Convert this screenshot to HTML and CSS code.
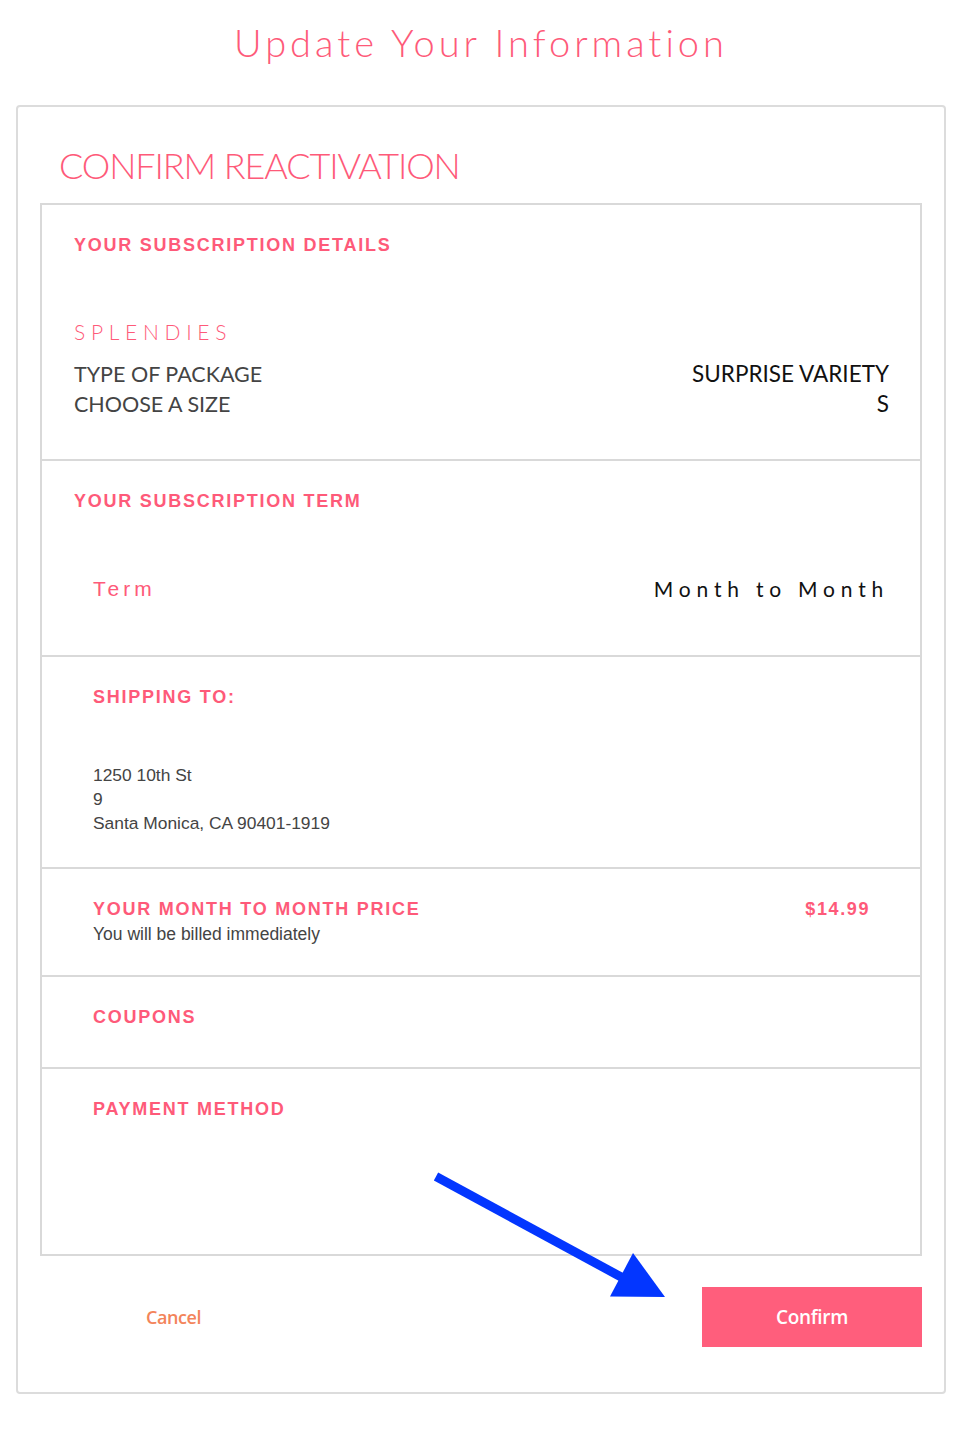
FILE: index.html
```html
<!DOCTYPE html>
<html lang="en">
<head>
<meta charset="utf-8">
<title>Update Your Information</title>
<link rel="stylesheet" href="styles.css">
</head>
<body>
<div class="page">
  <h1 class="page-title">Update Your Information</h1>
  <div class="card">
    <h2 class="card-title">CONFIRM REACTIVATION</h2>
    <div class="summary">
      <section class="sec sec-details">
        <h3 class="sec-head">YOUR SUBSCRIPTION DETAILS</h3>
        <div class="brand">SPLENDIES</div>
        <div class="kv">
          <div class="kv-row"><span class="kv-key">TYPE OF PACKAGE</span><span class="kv-val">SURPRISE VARIETY</span></div>
          <div class="kv-row"><span class="kv-key">CHOOSE A SIZE</span><span class="kv-val">S</span></div>
        </div>
      </section>
      <section class="sec sec-term">
        <h3 class="sec-head">YOUR SUBSCRIPTION TERM</h3>
        <div class="term-row">
          <span class="term-key">Term</span>
          <span class="term-val">Month to Month</span>
        </div>
      </section>
      <section class="sec sec-ship">
        <h3 class="sec-head">SHIPPING TO:</h3>
        <div class="address">
          <div>1250 10th St</div>
          <div>9</div>
          <div>Santa Monica, CA 90401-1919</div>
        </div>
      </section>
      <section class="sec sec-price">
        <div class="price-row">
          <h3 class="sec-head">YOUR MONTH TO MONTH PRICE</h3>
          <span class="price">$14.99</span>
        </div>
        <div class="price-note">You will be billed immediately</div>
      </section>
      <section class="sec sec-coupons">
        <h3 class="sec-head">COUPONS</h3>
      </section>
      <section class="sec sec-payment">
        <h3 class="sec-head">PAYMENT METHOD</h3>
      </section>
    </div>
    <div class="actions">
      <a class="cancel" href="#">Cancel</a>
      <button class="confirm" type="button">Confirm</button>
    </div>
  </div>
  <svg class="arrow" width="240" height="140" viewBox="0 0 240 140" aria-hidden="true">
    <line x1="6" y1="11.5" x2="193" y2="113" stroke="#0336ff" stroke-width="9"/>
    <polygon points="235,132 180,131.5 203,88" fill="#0336ff"/>
  </svg>
</div>
</body>
</html>
```

FILE: styles.css
```css
html, body {
  margin: 0;
  padding: 0;
  background: #ffffff;
}

.page {
  position: relative;
  width: 962px;
}

.page-title {
  margin: 0 0 40px;
  padding-top: 19px;
  font-family: "Lato", "Liberation Sans", sans-serif;
  font-weight: 300;
  font-size: 38px;
  line-height: 46px;
  letter-spacing: 4px;
  text-align: center;
  color: #fe5a79;
}

.card {
  margin: 0 16px;
  border: 2px solid #dcdcdc;
  border-radius: 4px;
  padding: 36px 22px 45px;
}

.card-title {
  margin: 0 0 16px 19px;
  font-family: "Lato", "Liberation Sans", sans-serif;
  font-weight: 300;
  font-size: 36px;
  line-height: 44px;
  letter-spacing: -1.1px;
  color: #fe5a79;
}

.summary {
  border: 2px solid #d9d9d9;
}

.sec + .sec {
  border-top: 2px solid #d9d9d9;
}

.sec-head {
  margin: 0;
  font-family: "Liberation Sans", Arial, sans-serif;
  font-weight: 700;
  font-size: 18px;
  line-height: 20px;
  letter-spacing: 1.75px;
  color: #fe5a79;
}

/* Section 1 */
.sec-details {
  padding: 30px 31px 40px 32px;
}

.brand {
  margin-top: 65px;
  font-family: "Lato", "Liberation Sans", sans-serif;
  font-weight: 300;
  font-size: 21px;
  line-height: 24px;
  letter-spacing: 5.7px;
  color: #fe5a79;
}

.kv {
  margin-top: 15px;
}

.kv-row {
  display: flex;
  justify-content: space-between;
  align-items: baseline;
  font-family: "Lato", "Liberation Sans", sans-serif;
  line-height: 30px;
}

.kv-key {
  font-size: 21.5px;
  color: #444444;
}

.kv-val {
  font-size: 22.5px;
  color: #111111;
}

/* Section 2 */
.sec-term {
  padding: 30px 31px 54px 32px;
}

.term-row {
  margin-top: 66px;
  padding-left: 19px;
  display: flex;
  justify-content: space-between;
  line-height: 24px;
}

.term-key {
  font-family: "Liberation Sans", Arial, sans-serif;
  font-size: 21px;
  letter-spacing: 4px;
  color: #fe5a79;
}

.term-val {
  font-family: "Lato", "Liberation Sans", sans-serif;
  font-weight: 400;
  font-size: 21px;
  letter-spacing: 5.8px;
  color: #111111;
}

/* Section 3 */
.sec-ship {
  padding: 30px 31px 32px 51px;
}

.address {
  margin-top: 56px;
  font-family: "Liberation Sans", Arial, sans-serif;
  font-size: 17.4px;
  line-height: 24px;
  color: #444444;
}

/* Section 4 */
.sec-price {
  padding: 30px 50px 29px 51px;
}

.price-row {
  display: flex;
  justify-content: space-between;
}

.price {
  font-family: "Liberation Sans", Arial, sans-serif;
  font-weight: 700;
  font-size: 18px;
  line-height: 20px;
  letter-spacing: 1.6px;
  color: #fe5a79;
}

.price-note {
  margin-top: 3px;
  font-family: "Liberation Sans", Arial, sans-serif;
  font-size: 17.5px;
  line-height: 24px;
  color: #444444;
}

/* Section 5 & 6 */
.sec-coupons {
  padding: 30px 51px 40px;
}

.sec-payment {
  padding: 30px 51px 135px;
}

/* Actions */
.actions {
  margin-top: 31px;
  display: flex;
  align-items: center;
  justify-content: space-between;
}

.cancel {
  margin-left: 106px;
  font-family: "Open Sans", "Liberation Sans", sans-serif;
  font-weight: 600;
  font-size: 18px;
  line-height: 24px;
  letter-spacing: -0.4px;
  color: #f3845a;
  text-decoration: none;
}

.confirm {
  width: 220px;
  height: 60px;
  border: 0;
  padding: 0;
  background: #ff5e7c;
  color: #ffffff;
  font-family: "Open Sans", "Liberation Sans", sans-serif;
  font-weight: 600;
  font-size: 19px;
  letter-spacing: -0.3px;
}

.arrow {
  position: absolute;
  left: 430px;
  top: 1165px;
}
```
